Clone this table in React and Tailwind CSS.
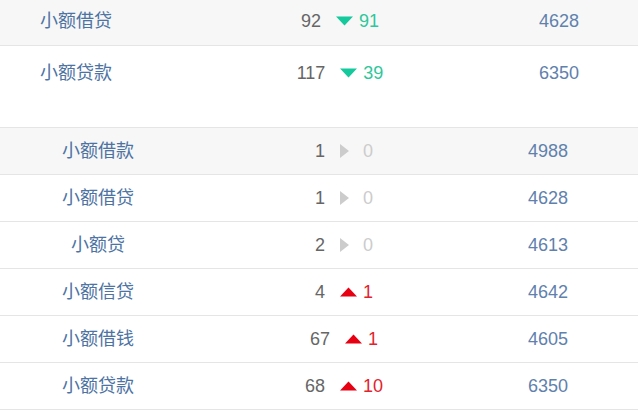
import React from 'react'

const topRows = [
    { name: '小额借贷', count: 92, trend: 'down', diff: 91, total: 4628 },
    { name: '小额贷款', count: 117, trend: 'down', diff: 39, total: 6350 },
]

const rows = [
    { name: '小额借款', count: 1, trend: 'flat', diff: 0, total: 4988 },
    { name: '小额借贷', count: 1, trend: 'flat', diff: 0, total: 4628 },
    { name: '小额贷', count: 2, trend: 'flat', diff: 0, total: 4613 },
    { name: '小额信贷', count: 4, trend: 'up', diff: 1, total: 4642 },
    { name: '小额借钱', count: 67, trend: 'up', diff: 1, total: 4605 },
    { name: '小额贷款', count: 68, trend: 'up', diff: 10, total: 6350 },
]

const Arrow = ({ trend }) => {
    if (trend === 'down') {
        return (
            <svg width="17" height="10" viewBox="0 0 17 10" className="shrink-0">
                <path d="M0 0.5 L17 0.5 L8.5 9.5 Z" fill="#14c99b" />
            </svg>
        )
    }
    if (trend === 'up') {
        return (
            <svg width="17" height="10" viewBox="0 0 17 10" className="shrink-0">
                <path d="M0 9.5 L17 9.5 L8.5 0.5 Z" fill="#e60012" />
            </svg>
        )
    }
    return (
        <svg width="17" height="14" viewBox="0 0 17 14" className="shrink-0">
            <path d="M0 0 L9 7 L0 14 Z" fill="#cccccc" />
        </svg>
    )
}

const diffColor = {
    down: 'text-[#2ec79b]',
    up: 'text-[#e2232c]',
    flat: 'text-[#cccccc]',
}

const Change = ({ row }) => (
    <div className="flex items-center">
        <span className="text-[#666666]">{row.count}</span>
        <span className="ml-[15px] flex items-center"><Arrow trend={row.trend} /></span>
        <span className={`ml-[6px] ${diffColor[row.trend]}`}>{row.diff}</span>
    </div>
)

export default function App() {
    return (
        <div className="w-[638px] bg-white text-[18px] leading-none" style={{ fontFamily: '"Liberation Sans", "Noto Sans CJK SC", sans-serif' }}>
            {/* top summary */}
            <div>
                {topRows.map((row, i) => (
                    <div
                        key={row.name}
                        className={
                            i === 0
                                ? 'flex h-[46px] items-center pb-[4px] bg-[#f7f7f7] border-b border-[#e5e5e5]'
                                : 'flex h-[52px] items-center pt-[1px]'
                        }
                    >
                        <div className="w-[240px] pl-[40px] text-[#4d73a3]">{row.name}</div>
                        <div className="w-[200px] flex justify-center"><Change row={row} /></div>
                        <div className="flex-1 text-right pr-[59px] text-[#5f81ad]">{row.total}</div>
                    </div>
                ))}
            </div>

            {/* detail list */}
            <div className="mt-[29px] border-t border-[#e5e5e5]">
                {rows.map((row, i) => (
                    <div
                        key={row.name + i}
                        className={`flex h-[47px] items-center border-b border-[#e5e5e5] ${i === 0 ? 'bg-[#f7f7f7]' : ''}`}
                    >
                        <div className="w-[196px] text-center text-[#4d73a3]">{row.name}</div>
                        <div className="w-[296px] flex justify-center"><Change row={row} /></div>
                        <div className="flex-1 text-right pr-[70px] text-[#5f81ad]">{row.total}</div>
                    </div>
                ))}
            </div>
        </div>
    )
}
